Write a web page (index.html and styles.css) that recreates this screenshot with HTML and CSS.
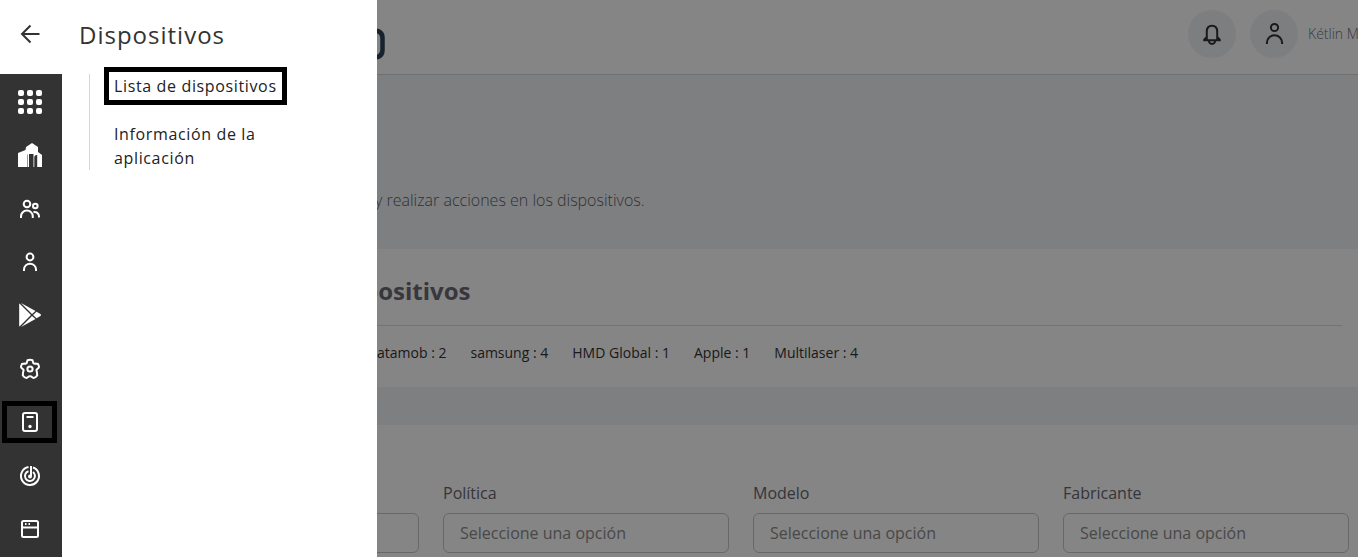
FILE: index.html
```html
<!DOCTYPE html>
<html lang="es">
<head>
<meta charset="utf-8">
<meta name="viewport" content="width=device-width, initial-scale=1">
<title>Dispositivos</title>
<link rel="stylesheet" href="styles.css">
</head>
<body>
<div class="page">
  <header class="topbar">
    <svg class="logo" viewBox="0 0 24 32" aria-hidden="true"><path d="M6 2.500H12Q21.500 2.500 21.500 10V22Q21.500 29.500 12 29.500H6" fill="none" stroke="currentColor" stroke-width="4.500"/></svg>
    <div class="account">
      <button class="round" type="button" aria-label="Notificaciones">
        <svg class="icon" viewBox="0 0 24 24"><path d="M6.800 17.500V9.500Q6.800 3.700 12 3.700T17.200 9.500V17.500M3.200 18.200H20.800M4.200 17.800L6.800 15M19.800 17.800L17.200 15M8.800 18.500Q9.200 22 12 22T15.200 18.500"/></svg>
      </button>
      <button class="round" type="button" aria-label="Perfil">
        <svg class="icon" viewBox="0 0 24 24"><circle cx="12.500" cy="5.500" r="3.600"/><path d="M4.900 22V20.500A7.600 7.200 0 0 1 20.100 20.500V22"/></svg>
      </button>
      <span class="user">Kétlin M</span>
    </div>
  </header>
  <main>
    <section class="intro"><p>y realizar acciones en los dispositivos.</p></section>
    <section class="card summary">
      <h2>positivos</h2>
      <ul class="makers">
        <li>atamob : 2</li>
        <li>samsung : 4</li>
        <li>HMD Global : 1</li>
        <li>Apple : 1</li>
        <li>Multilaser : 4</li>
      </ul>
    </section>
    <form class="card filters">
      <div class="field"><select class="control" aria-label="Filtro"><option></option></select></div>
      <div class="field"><label for="politica">Política</label><select class="control" id="politica"><option>Seleccione una opción</option></select></div>
      <div class="field"><label for="modelo">Modelo</label><select class="control" id="modelo"><option>Seleccione una opción</option></select></div>
      <div class="field"><label for="fabricante">Fabricante</label><select class="control" id="fabricante"><option>Seleccione una opción</option></select></div>
    </form>
  </main>
</div>
<div class="backdrop"></div>
<aside class="drawer">
  <div class="rail">
    <button class="back" type="button" aria-label="Volver"><svg class="icon" viewBox="0 0 24 24"><path d="M21.500 12H4M12.500 3.500L4 12L12.500 20.500"/></svg></button>
    <nav class="menu" aria-label="Principal">
      <a href="#" aria-label="Panel"><svg class="icon solid" viewBox="0 0 24 24"><rect width="6" height="6" rx="2"/><rect x="9" width="6" height="6" rx="2"/><rect x="18" width="6" height="6" rx="2"/><rect y="9" width="6" height="6" rx="2"/><rect x="9" y="9" width="6" height="6" rx="2"/><rect x="18" y="9" width="6" height="6" rx="2"/><rect y="18" width="6" height="6" rx="2"/><rect x="9" y="18" width="6" height="6" rx="2"/><rect x="18" y="18" width="6" height="6" rx="2"/></svg></a>
      <a href="#" aria-label="Empresa"><svg class="icon solid" viewBox="0 0 24 24"><path d="M0 24V10L7.500 7L8 4L14 0L20 4V9L24 12V24H19.200V12H18L16.300 13.500V24H15.500V11H11V24H10V11L9.500 12V24Z"/></svg></a>
      <a href="#" aria-label="Grupos"><svg class="icon" viewBox="0 0 24 24"><circle cx="9" cy="7" r="3.300"/><circle cx="17.300" cy="9" r="2.300"/><path d="M3 21V19.500A5.900 5.900 0 0 1 14.800 19.500V21M15.500 15.200A4.200 4.200 0 0 1 21 19.300V20.500"/></svg></a>
      <a href="#" aria-label="Usuarios"><svg class="icon" viewBox="0 0 24 24"><circle cx="12" cy="7" r="3.400"/><path d="M6 21V19.500A6 5.800 0 0 1 18 19.500V21"/></svg></a>
      <a href="#" aria-label="Aplicaciones"><svg class="icon solid" viewBox="0 0 24 24"><path d="M1.500 0.500Q1.200 .8 1.200 1.500V22.500Q1.200 23.300 1.500 23.500L13 12Z"/><path d="M3 0L17.500 8L14 11ZM3 24L17.500 16L14 13ZM18.500 8.800L22.500 11Q23.500 12 22.500 13L18.500 15.200L15 12Z"/></svg></a>
      <a href="#" aria-label="Configuración"><svg class="icon" viewBox="0 0 24 24"><circle cx="12" cy="12" r="2.600"/><path d="M9.500 3.200Q12 2.400 14.500 3.200L15.300 6Q16.200 6.900 17.300 6.600L20 7Q21.300 9.200 20.900 10.500L18.500 12.800Q18.200 14 18.900 15L19.200 18.500Q17.500 20.900 15.500 21L13 19.400Q12 19 11 19.400L8.500 21Q6.500 20.900 4.800 18.500L5.100 15Q5.800 14 5.500 12.800L3.100 10.500Q2.700 9.200 4 7L6.700 6.600Q7.800 6.900 8.700 6Z"/></svg></a>
      <a class="current" href="#" aria-label="Dispositivos" aria-current="page"><svg class="icon" viewBox="0 0 24 24"><rect x="5" y="3" width="14" height="18" rx="2"/><path d="M8.500 7H15.500"/><circle class="dot" cx="12" cy="16.500" r="1.700"/></svg></a>
      <a href="#" aria-label="Rastreo"><svg class="icon" viewBox="0 0 24 24"><path d="M15 3.500A9 9 0 1 1 10.500 3.100M15 8A5 5 0 1 1 10.500 7.200M13 2V12"/><circle class="dot" cx="12" cy="12.500" r="2"/></svg></a>
      <a href="#" aria-label="Ventanas"><svg class="icon" viewBox="0 0 24 24"><rect x="4" y="4" width="16" height="16" rx="1.500"/><path d="M4 10.500H20M7 7H8.500M10.500 7H12"/></svg></a>
    </nav>
  </div>
  <div class="panel">
    <h1>Dispositivos</h1>
    <nav class="submenu" aria-label="Dispositivos">
      <a class="selected" href="#">Lista de dispositivos</a>
      <a href="#">Información de la aplicación</a>
    </nav>
  </div>
</aside>
</body>
</html>
```
FILE: styles.css
```css
* { box-sizing: border-box; }
body { margin: 0; font: 16px/24px "Open Sans", "Noto Sans", sans-serif; color: #222; overflow: hidden; }
h1, h2, p, ul { margin: 0; padding: 0; }
a { color: inherit; text-decoration: none; }
button { border: 0; padding: 0; color: inherit; background: none; }
.icon { display: block; width: 24px; height: 24px; fill: none; stroke: currentColor; stroke-width: 2; }
.solid, .dot { fill: currentColor; stroke: none; }

.page { min-height: 100vh; background: #f2f4f8; }
.topbar { display: flex; align-items: center; justify-content: space-between; height: 75px; padding: 0 0 6px 361px; background: #fff; border-bottom: 1px solid #d5d7da; }
.logo { width: 24px; height: 32px; margin-top: 20px; color: #2c4158; }
.account { display: flex; align-items: center; gap: 14px; color: #333; }
.round { display: grid; place-items: center; width: 48px; height: 48px; border-radius: 50%; background: #f0f2f6; }
.user { width: 50px; margin-left: -4px; overflow: hidden; white-space: nowrap; font-size: 14px; font-weight: 300; color: #6b7380; }

.intro { height: 174px; padding: 113px 16px 0 375px; font-weight: 300; color: #5c5f69; }
.card { background: #fff; }
.summary { height: 138px; padding: 24px 16px 0 133px; }
.summary h2 { padding: 0 0 16px 230px; border-bottom: 1px solid #dcdfe4; font-size: 24px; line-height: 36px; font-weight: 700; color: #6a6a76; }
.makers { display: flex; gap: 24px; padding: 15px 0 0 244px; list-style: none; font-size: 14px; white-space: nowrap; color: #333; }
.filters { display: grid; grid-template-columns: repeat(4, 1fr); align-items: end; gap: 24px; min-height: 132px; margin-top: 38px; padding: 0 9px 4px 133px; }
.field { display: grid; gap: 8px; color: #666672; }
.control { width: 100%; height: 40px; padding: 0 16px; appearance: none; border: 1px solid #c8c8cc; border-radius: 6px; background: #fff; color: #8b8b8b; font: inherit; }

.backdrop { position: fixed; inset: 0; background: rgba(0, 0, 0, .48); }
.drawer { position: fixed; inset: 0 auto 0 0; display: flex; width: 377px; background: #fff; }
.rail { display: flex; flex-direction: column; width: 62px; }
.back { display: grid; place-items: center; height: 74px; padding: 0 2px 6px 0; color: #333; }
.menu { flex: 1; display: grid; grid-auto-rows: 1fr; align-items: center; justify-items: center; padding: 1px 3px 1px 0; background: #333; color: #fff; }
.menu a { display: grid; place-items: center; width: 55px; height: 42px; }
.menu .current { border: 5px solid #000; }
.panel { flex: 1; padding: 17px 17px 0; }
h1 { font-size: 24px; line-height: 36px; font-weight: 400; letter-spacing: 1px; color: #333; }
.submenu { display: grid; justify-items: start; gap: 24px; width: 240px; margin: 21px 0 0 10px; border-left: 1px solid #d5d5d5; padding: 0 0 0 24px; letter-spacing: 0.04em; }
.selected { margin: 0 -3px; padding: 0 3px; outline: 5px solid #000; outline-offset: 2px; }
```
